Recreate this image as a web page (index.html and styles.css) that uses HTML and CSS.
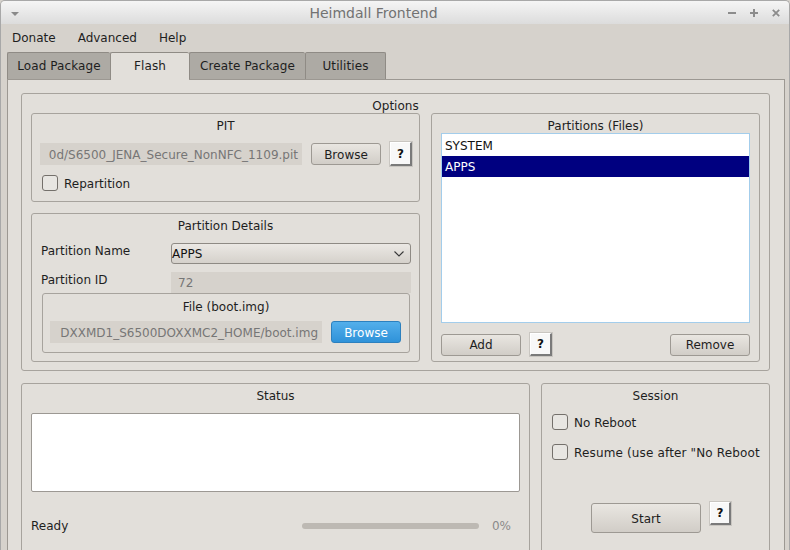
FILE: index.html
```html
<!DOCTYPE html>
<html>
<head>
<meta charset="utf-8">
<title>Heimdall Frontend</title>
<link rel="stylesheet" href="styles.css">
</head>
<body>
<div class="window">
  <div class="titlebar">
    <svg class="tb-menu" width="8" height="4" viewBox="0 0 8 4"><polygon points="0,0 8,0 4,4" fill="#8a8a8a"/></svg>
    <div class="tb-title">Heimdall Frontend</div>
    <div class="tb-controls">
      <svg width="8" height="8" viewBox="0 0 8 8"><rect x="0" y="3" width="8" height="2" fill="#8c8c8c"/></svg>
      <svg width="8" height="8" viewBox="0 0 8 8"><rect x="0" y="3" width="8" height="2" fill="#8c8c8c"/><rect x="3" y="0" width="2" height="8" fill="#8c8c8c"/></svg>
      <svg width="8" height="8" viewBox="0 0 8 8"><path d="M0.8 0.8 L7.2 7.2 M7.2 0.8 L0.8 7.2" stroke="#8c8c8c" stroke-width="1.8"/></svg>
    </div>
  </div>
  <div class="menubar">
    <span class="menu-item">Donate</span>
    <span class="menu-item">Advanced</span>
    <span class="menu-item">Help</span>
  </div>
  <div class="tabs">
    <div class="tab tab-load">Load Package</div>
    <div class="tab tab-flash active">Flash</div>
    <div class="tab tab-create">Create Package</div>
    <div class="tab tab-utils">Utilities</div>
  </div>
  <div class="pane">
    <div class="group options">
      <div class="group-title">Options</div>
      <div class="options-body">
        <div class="col-left">
          <div class="group pit">
            <div class="group-title">PIT</div>
            <div class="pit-row">
              <div class="lineedit pit-file"><span>0d/S6500_JENA_Secure_NonNFC_1109.pit</span></div>
              <div class="btn browse">Browse</div>
              <div class="help">?</div>
            </div>
            <div class="cb-row pit-cb">
              <div class="cb"></div>
              <span class="cb-label">Repartition</span>
            </div>
          </div>
          <div class="group details">
            <div class="group-title">Partition Details</div>
            <div class="form">
              <div class="form-label">Partition Name</div>
              <div class="combo">
                <span>APPS</span>
                <svg width="10" height="6" viewBox="0 0 10 6"><polyline points="0.5,0.5 5,5 9.5,0.5" fill="none" stroke="#3a3a3a" stroke-width="1.1"/></svg>
              </div>
              <div class="form-label">Partition ID</div>
              <div class="lineedit id-field"><span>72</span></div>
            </div>
            <div class="group filebox">
              <div class="group-title">File (boot.img)</div>
              <div class="file-row">
                <div class="lineedit file-path"><span>DXXMD1_S6500DOXXMC2_HOME/boot.img</span></div>
                <div class="btn btn-blue browse">Browse</div>
              </div>
            </div>
          </div>
        </div>
        <div class="group partitions">
          <div class="group-title">Partitions (Files)</div>
          <div class="list">
            <div class="list-row">SYSTEM</div>
            <div class="list-row selected">APPS</div>
          </div>
          <div class="list-buttons">
            <div class="btn list-btn">Add</div>
            <div class="help help-list">?</div>
            <div class="spacer"></div>
            <div class="btn list-btn">Remove</div>
          </div>
        </div>
      </div>
    </div>
    <div class="bottom-row">
      <div class="group status">
        <div class="group-title">Status</div>
        <div class="textarea"></div>
        <div class="ready-row">
          <span class="ready">Ready</span>
          <div class="progress"></div>
          <span class="percent">0%</span>
        </div>
      </div>
      <div class="group session">
        <div class="group-title">Session</div>
        <div class="cb-row session-cb first">
          <div class="cb"></div>
          <span class="cb-label">No Reboot</span>
        </div>
        <div class="cb-row session-cb second">
          <div class="cb"></div>
          <span class="cb-label resume">Resume (use after "No Reboot</span>
        </div>
        <div class="start-row">
          <div class="btn start">Start</div>
          <div class="help help-start">?</div>
        </div>
      </div>
    </div>
  </div>
</div>
</body>
</html>
```
FILE: styles.css
```css
* { box-sizing: border-box; }
html, body { margin: 0; padding: 0; }
body {
  width: 790px;
  height: 550px;
  overflow: hidden;
  font-family: "DejaVu Sans", "Liberation Sans", sans-serif;
  font-size: 12px;
  color: #1e1e1e;
  background: #d6d2cc;
}
.window {
  width: 790px;
  height: 550px;
  display: flex;
  flex-direction: column;
  background: #d6d2cc;
  border: 1px solid #a8a8a8;
  border-bottom: none;
  border-radius: 5px 5px 0 0;
  overflow: hidden;
}
.titlebar {
  height: 23px;
  flex: none;
  display: flex;
  align-items: center;
  padding: 0 9px 0 10px;
  background: linear-gradient(#f5f5f5, #dcdcdc);
}
.tb-menu { margin-top: 3px; flex: none; }
.tb-title {
  flex: 1;
  text-align: center;
  font-size: 14px;
  color: #727272;
}
.tb-controls { display: flex; gap: 14px; align-items: center; }
.menubar {
  height: 26px;
  flex: none;
  display: flex;
  padding-top: 2px;
}
.menu-item { padding: 0 11px; line-height: 24px; }
.tabs {
  display: flex;
  align-items: flex-start;
  margin: 2px 0 0 6px;
  height: 27px;
  flex: none;
}
.tab {
  height: 27px;
  border: 1px solid #8f8b85;
  border-bottom: none;
  border-right: none;
  border-radius: 2px 2px 0 0;
  background: #adaaa4;
  display: flex;
  align-items: center;
  justify-content: center;
  padding-bottom: 1px;
  letter-spacing: 0.1px;
}
.tab-load { width: 103px; }
.tab-flash { width: 79px; }
.tab-create { width: 116px; }
.tab-utils { width: 81px; border-right: 1px solid #8f8b85; }
.tab.active {
  background: #e2dfda;
  height: 28px;
  margin-bottom: -1px;
  position: relative;
  z-index: 1;
  padding-bottom: 2px;
}
.pane {
  flex: 1;
  margin-left: 6px;
  width: 778px;
  border: 1px solid #9c9892;
  border-bottom: none;
  background: #e2dfda;
  padding: 13px 14px 0 13px;
  overflow: hidden;
}
.group {
  border: 1px solid #a7a39d;
  border-radius: 3px;
}
.group-title {
  line-height: 14px;
  padding: 5px 0 0;
  height: 19px;
  text-align: center;
  white-space: nowrap;
}
.options-body {
  display: flex;
  gap: 11px;
  padding: 0 9px 8px;
}
.col-left {
  width: 389px;
  display: flex;
  flex-direction: column;
  gap: 11px;
}
.pit { height: 89px; }
.pit-row {
  display: flex;
  align-items: center;
  gap: 9px;
  height: 24px;
  margin-top: 9px;
  padding-left: 8px;
}
.lineedit {
  display: flex;
  justify-content: flex-end;
  align-items: center;
  overflow: hidden;
  white-space: nowrap;
  background: #d6d2cc;
  color: #767676;
  height: 22px;
  padding: 1px 4px 0;
}
.lineedit span { flex: none; }
.pit-file { width: 262px; }
.btn {
  height: 22px;
  border: 1px solid #9d9993;
  border-radius: 3px;
  background: linear-gradient(#e9e6e1, #d1cdc7);
  display: flex;
  align-items: center;
  justify-content: center;
  white-space: nowrap;
  padding-top: 1px;
}
.btn-blue {
  background: linear-gradient(#53afeb, #2f92d9);
  border-color: #2c80be;
  color: #ffffff;
}
.browse { width: 70px; }
.help {
  width: 22px;
  height: 24px;
  background: #f8f8f8;
  border-top: 1px solid #ffffff;
  border-left: 1px solid #ffffff;
  border-right: 2px solid #7a7a7a;
  border-bottom: 2px solid #7a7a7a;
  box-shadow: 0 0 0 1px #c9c6c1;
  font-weight: bold;
  font-size: 12px;
  display: flex;
  align-items: center;
  justify-content: center;
  color: #111;
}
.cb-row {
  display: flex;
  align-items: center;
  gap: 6px;
}
.cb {
  width: 16px;
  height: 16px;
  flex: none;
  border: 1px solid #74706b;
  border-radius: 3px;
  background: #e8e6e2;
}
.cb-label { padding-top: 2px; }
.pit-cb { margin-top: 9px; padding-left: 10px; height: 16px; }
.details { height: 149px; }
.form {
  display: grid;
  grid-template-columns: 130px 240px;
  row-gap: 8px;
  padding: 0 8px 0 9px;
  margin-top: 10px;
}
.form-label { line-height: 14px; align-self: start; padding-top: 1px; }
.combo {
  height: 21px;
  border: 1px solid #8e8a84;
  border-radius: 3px;
  background: linear-gradient(#ebe8e4, #d5d1cb);
  display: flex;
  align-items: center;
  justify-content: space-between;
  padding: 1px 6px 0 0;
  color: #111;
}
.combo svg { margin-top: -1px; }
.id-field {
  height: 21px;
  justify-content: flex-start;
  padding-left: 7px;
}
.filebox {
  margin: 0 9px 0 10px;
  height: 60px;
}
.filebox .group-title { padding-top: 6px; }
.file-row {
  display: flex;
  align-items: center;
  gap: 9px;
  margin-top: 8px;
  padding-left: 7px;
}
.file-path { width: 272px; }
.partitions {
  flex: 1;
  height: 249px;
  display: flex;
  flex-direction: column;
}
.list {
  margin: 0 9px;
  height: 190px;
  border: 1px solid #a3cdeb;
  background: #ffffff;
  flex: none;
  padding-top: 1px;
}
.list-row {
  height: 21px;
  line-height: 21px;
  padding: 1px 0 0 3px;
  color: #111;
}
.list-row.selected { background: #000080; color: #ffffff; }
.list-buttons {
  display: flex;
  align-items: center;
  gap: 9px;
  margin: 10px 9px 0;
  height: 23px;
}
.list-btn { width: 80px; }
.help-list { width: 22px; height: 23px; }
.spacer { flex: 1; }
.bottom-row {
  display: flex;
  gap: 11px;
  margin-top: 12px;
}
.status { width: 509px; height: 200px; }
.textarea {
  height: 79px;
  margin: 10px 9px 0;
  border: 1px solid #9c9893;
  border-radius: 2px;
  background: #ffffff;
}
.ready-row {
  display: flex;
  align-items: center;
  height: 20px;
  margin-top: 24px;
  padding: 0 18px 0 9px;
}
.ready { flex: 1; }
.progress {
  width: 177px;
  height: 6px;
  border-radius: 3px;
  background: #bdb9b3;
  margin-top: -1px;
}
.percent { margin-left: 13px; color: #8a8a8a; }
.session { flex: 1; height: 200px; overflow: hidden; }
.session-cb { padding: 0 7px 0 10px; height: 16px; }
.session-cb.first { margin-top: 11px; }
.session-cb.second { margin-top: 14px; }
.resume { white-space: nowrap; letter-spacing: 0.15px; }
.start-row {
  display: flex;
  align-items: flex-start;
  gap: 9px;
  margin-top: 43px;
  padding-left: 49px;
}
.start { width: 110px; height: 30px; }
.help-start { width: 21px; height: 23px; margin-top: -1px; }
```
